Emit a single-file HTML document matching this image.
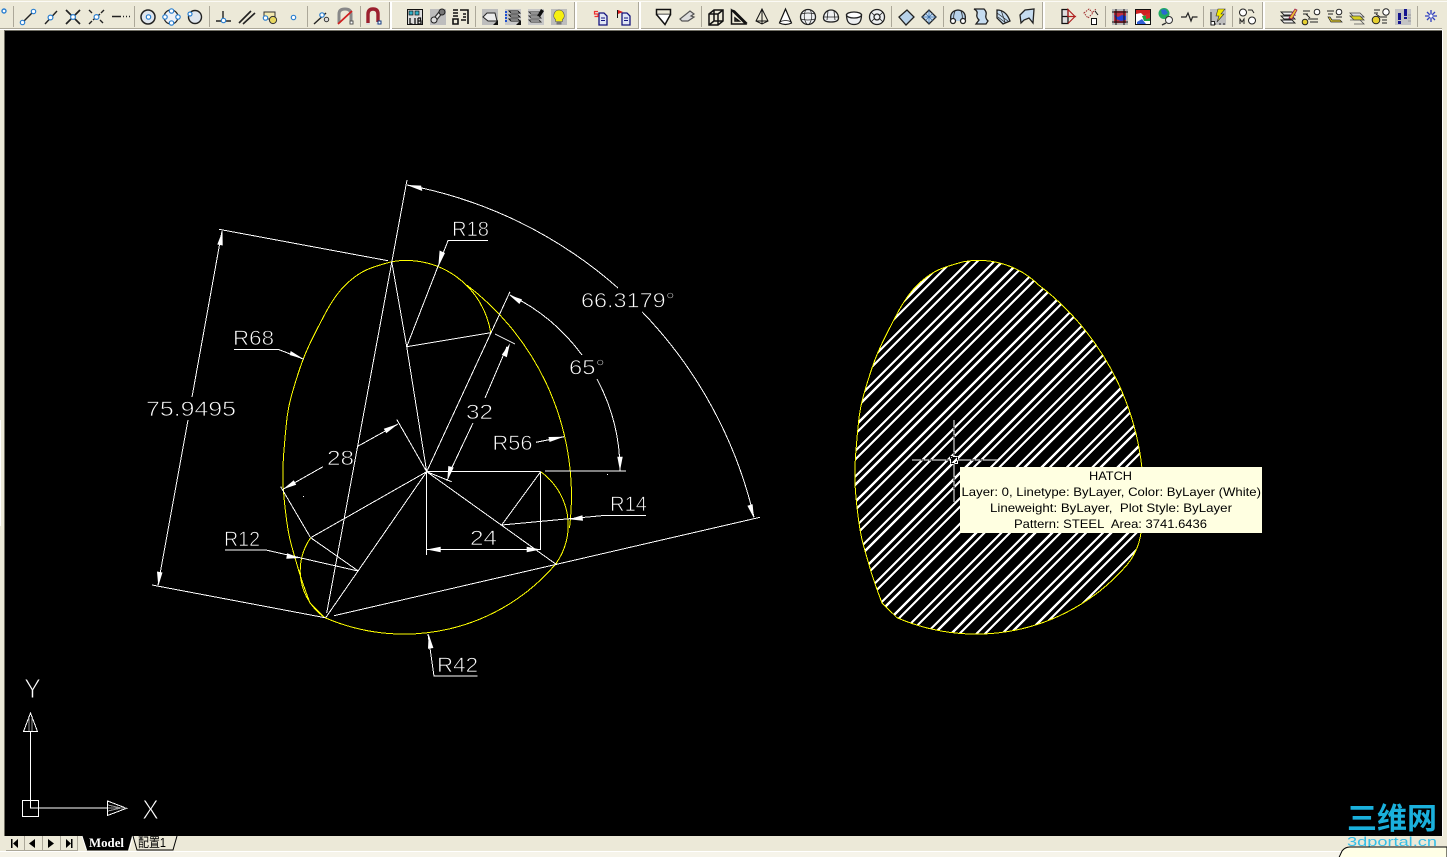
<!DOCTYPE html>
<html lang="zh"><head><meta charset="utf-8"><title>CAD</title>
<style>html,body{margin:0;padding:0;background:#ece9d8;overflow:hidden}svg{display:block}</style></head>
<body>
<svg xmlns="http://www.w3.org/2000/svg" width="1447" height="857" viewBox="0 0 1447 857">
<rect width="1447" height="857" fill="#ece9d8"/>
<!-- chrome -->
<rect x="0" y="1" width="1447" height="1" fill="#fbfaf5"/>
<rect x="0" y="28" width="1442" height="1" fill="#aca899"/>
<rect x="0" y="29" width="1442" height="1" fill="#fff"/>
<rect x="4" y="30" width="1438" height="1" fill="#716f64"/>
<rect x="4" y="30" width="1" height="806" fill="#716f64"/>
<rect x="1442" y="30" width="1" height="806" fill="#fff"/>
<rect x="0" y="420" width="1" height="106" fill="#fff"/>
<rect x="5" y="31" width="1437" height="805" fill="#000"/>
<rect x="0" y="852" width="1447" height="5" fill="#f6f4ea"/>
<rect x="0" y="851" width="1447" height="1" fill="#fff"/>
<!-- dividers -->
<g fill="#fff"><rect x="390" y="2" width="2" height="27"/><rect x="575" y="2" width="2" height="27"/><rect x="639" y="2" width="2" height="27"/><rect x="1043" y="2" width="2" height="27"/><rect x="1263" y="2" width="2" height="27"/></g>
<g fill="#aca899"><rect x="389" y="2" width="1" height="27"/><rect x="574" y="2" width="1" height="27"/><rect x="638" y="2" width="1" height="27"/><rect x="1042" y="2" width="1" height="27"/><rect x="1262" y="2" width="1" height="27"/>
<rect x="13" y="6" width="1" height="21"/><rect x="134" y="6" width="1" height="21"/><rect x="209" y="6" width="1" height="21"/><rect x="307" y="6" width="1" height="21"/><rect x="360" y="6" width="1" height="21"/><rect x="475" y="6" width="1" height="21"/><rect x="701" y="6" width="1" height="21"/><rect x="891" y="6" width="1" height="21"/><rect x="943" y="6" width="1" height="21"/><rect x="1105" y="6" width="1" height="21"/><rect x="1203" y="6" width="1" height="21"/><rect x="1232" y="6" width="1" height="21"/><rect x="1417" y="6" width="1" height="21"/></g>
<!-- osnap icons -->
<g fill="none" stroke="#222" stroke-width="1.4">
<circle cx="4" cy="11" r="2" fill="#fff" stroke="#2a7fd0"/>
<path d="M23 22L33 12"/><path d="M45 24L57 11"/><path d="M66 10L80 24M80 10L66 24" stroke-width="1.700"/><path d="M89 24l3-3M93 20L100 14M101 13l3-3M89 10l3 3M100 20l3 3"/><path d="M112 16.500h9M123 16.500h1M126 16.500h1M129 16.500h1" stroke-width="1.600"/>
<circle cx="148" cy="17" r="7" fill="#dfe6ee" stroke-width="1.500"/><circle cx="171" cy="17" r="7" fill="#eef1f5" stroke-width="1.200"/><circle cx="195" cy="17" r="6.500" fill="#dfe6ee" stroke-width="1.400"/>
<path d="M216 21h15M223 11v9"/><path d="M239 23L251 11M243 24L255 13" stroke-width="1.600"/><rect x="264" y="12" width="11" height="7" fill="#f3e9b0" stroke="#333" stroke-width="1"/><path d="M314 24L326 13"/>
<path d="M339 23V14Q339 9 345 9Q351 9 351 14V21" stroke="#888" stroke-width="3"/><path d="M338 24L352 11" stroke="#d02020" stroke-width="1.800"/>
<path d="M368 24V14Q368 9 373 9Q378 9 378 14V22" stroke="#9b1f2e" stroke-width="3.400"/><path d="M366 24h4M376 24h4" stroke="#ddd" stroke-width="2"/>
</g>
<g fill="#fff" stroke="#2a7fd0" stroke-width="1.2">
<circle cx="22.500" cy="22.500" r="2.200"/><circle cx="33.500" cy="11.500" r="2.200"/><circle cx="50.500" cy="17.500" r="2.400"/><circle cx="73" cy="17" r="2.400"/><circle cx="96.500" cy="17" r="2.400"/>
<circle cx="148.500" cy="17" r="2.200"/><circle cx="171.500" cy="11" r="2.200"/><circle cx="171.500" cy="23" r="2.200"/><circle cx="165" cy="17" r="2.200"/><circle cx="178" cy="17" r="2.200"/><circle cx="190" cy="14" r="2"/>
<circle cx="223.500" cy="20.500" r="2.200"/><circle cx="265.500" cy="18" r="2.200"/><circle cx="293.500" cy="17.500" r="2.200"/><circle cx="322" cy="15" r="2.200"/>
</g>
<circle cx="273" cy="20" r="3.600" fill="#e8d860" stroke="#333"/><circle cx="326.500" cy="19.500" r="2.200" fill="#ddd" stroke="#333"/>
<rect x="350" y="21" width="3" height="3" fill="#fff" stroke="#555"/><rect x="378" y="21" width="3" height="3" fill="#fff" stroke="#123a80"/>
<!-- lib group -->
<rect x="407.500" y="9.500" width="15" height="15" fill="#ddd" stroke="#111"/><rect x="409" y="11" width="4" height="4" fill="#30b0c8" stroke="#111" stroke-width=".7"/><rect x="415" y="11" width="4" height="4" fill="#30b0c8" stroke="#111" stroke-width=".7"/><path d="M410 18v6h2.500M415 18v6M418 18v6h3v-3h-3M418 18h2.500v3" fill="none" stroke="#111" stroke-width="1.300"/>
<rect x="430" y="9" width="16" height="16" fill="#bdbdbd"/><path d="M433 22L441 12" stroke="#333" stroke-width="4.500"/><path d="M433 22L441 12" stroke="#e8e8e8" stroke-width="2"/><circle cx="442" cy="12" r="3" fill="#777" stroke="#222"/><circle cx="434" cy="20" r="3" fill="#ddd" stroke="#222"/>
<path d="M453 10h5M453 13h5M453 16h5M453 19h5v5h-5zM460 10h8v14M463 14h3M463 17h3M461 20h5" fill="none" stroke="#111" stroke-width="1.600"/>
<rect x="482" y="9" width="16" height="16" fill="#bdbdbd"/><path d="M483 17L487 13H495L497 21H488Z" fill="#ececec" stroke="#222"/><path d="M493 25h5v-5z" fill="#111"/>
<rect x="505" y="9" width="16" height="16" fill="#c8c8c8"/><path d="M509 11h9l2 2-9 0zM509 15h9l2 2h-9zM509 19h9l2 2h-9z" fill="#eee" stroke="#111" stroke-width=".9"/><path d="M506 11v12" stroke="#1f50d0" stroke-width="2" stroke-dasharray="2 1"/><path d="M516 25h5v-5z" fill="#111"/>
<rect x="528" y="9" width="16" height="16" fill="#c8c8c8"/><path d="M529 12h10l2 2h-10zM529 16h10l2 2h-10zM529 20h10l2 2h-10z" fill="#eee" stroke="#333" stroke-width=".9"/><path d="M537 16L541 9l3 2-4 6" fill="#111"/>
<rect x="551" y="9" width="16" height="16" fill="#bdbdbd"/><path d="M559 10a5.500 5.500 0 0 1 3.500 9.500v2h-7v-2A5.500 5.500 0 0 1 559 10z" fill="#f6ef10" stroke="#555" stroke-width=".6"/><rect x="556.500" y="22" width="5" height="2.500" fill="#777"/>
<g fill="#dfe5f4" stroke="#14147e" stroke-width="1.300"><path d="M599 13h5l3 3v9h-8z"/><path d="M622 13h5l3 3v9h-8z"/></g>
<path d="M601 18h4M601 20.500h4M624 18h4M624 20.500h4" stroke="#14147e"/>
<path d="M598 11.500h-3.500v2.500h3.500v2.500h-3.500" fill="none" stroke="#f03030" stroke-width="1.200"/><path d="M617 10h1v8h-1z" fill="#111"/><path d="M618 10l5 2-5 2z" fill="#d81818"/>
<!-- solids -->
<g fill="#fff" stroke="#111" stroke-width="1.500">
<path d="M656.500 9.500h14v5h-14z" fill="#ece9d8"/><path d="M656.500 14.500l8.500 10 5.500-10" fill="#fff"/>
<path d="M680 19L690 11l4 3-3 2 3 1-6 4h-6z" fill="#ddd" stroke="#555" stroke-width="1.200"/>
<path d="M709 14l5-4h9v11l-5 4h-9zM709 14h9v11M718 14l5-4M714 10v11h9M714 21l-5 4" fill="none"/>
<path d="M731.500 10l14 14h-14zM731.500 10l3 1 12 12-1 1M735 18l4 3h-4z" fill="none"/>
<path d="M762 9l-6 12 6 3 6-3zM762 9v15M756 21l12 0" fill="none" stroke-width="1"/>
<path d="M785.500 9l-6 14q6 3 12 0z" stroke-width="1.200"/><path d="M779.500 22q6-3 12 0" fill="none" stroke-width=".8"/>
</g>
<g fill="#eef0f2" stroke="#222" stroke-width="1.300">
<circle cx="808" cy="17" r="7.500"/><path d="M801 14q7-2 14 0M800.500 19q7 2 15 0M806 9.500q-4 7.500 1 15M810 9.500q4 7.500-1 15" fill="none" stroke-width=".7"/>
<path d="M823.500 18a7.500 8 0 0 1 15 0q0 4-7.500 4t-7.500-4z"/><path d="M824 17h14M828 11l-1 9M834 11l1 9" fill="none" stroke-width=".8"/>
<path d="M846.500 14.500c2-2 13-2 15 0c0 8-3 10-7.500 10s-7.500-2-7.500-10z"/><ellipse cx="854" cy="15" rx="7.500" ry="3" fill="#fff"/>
<circle cx="877" cy="17" r="7.500"/><circle cx="877" cy="17" r="3"/><path d="M871 12l3 3M883 12l-3 3M871 22l3-3M883 22l-3-3" fill="none" stroke-width=".8"/>
</g>
<g stroke="#222" stroke-width="1.300">
<path d="M899 17L907 10l7 7-8 8z" fill="#b8d2ea"/>
<path d="M922 17l7-7 7 7-7 7z" fill="#c6dcf0"/><path d="M925.500 13.500l7 7M932.500 13.500l-7 7M929 10v14M922 17h14" stroke="#3b6ea8" stroke-width=".7" fill="none"/>
<path d="M951 21q-2-10 7-11q9 1 7 11" fill="#b8d2ea"/><path d="M955 11q-2 5-1 9M961 11q2 5 1 9" fill="none" stroke-width=".8"/><circle cx="953" cy="21" r="2.500" fill="#fff"/><circle cx="963" cy="21" r="2.500" fill="#fff"/>
<path d="M974 9q4 2 3 5t2 6l-3 4h10l2-3q-3-3-2-6t-2-6z" fill="#c6dcf0"/>
<path d="M997 10q9 0 13 11l-7 3-6-6z" fill="#c6dcf0"/><path d="M997 13l11 8M998 17l8 6M1001 10l4 12" stroke-width=".7" fill="none"/>
<path d="M1020 15l5-5 9-1-1 14-4-5-5 2-3 3z" fill="#c6dcf0"/>
</g>
<!-- modify / misc -->
<path d="M1062 9.500h6v14h-6zM1062 16.500h6" fill="#ddd" stroke="#111" stroke-width="1.300"/><path d="M1068 9.500l7 7h-7zM1068 16.500h7l-7 7" fill="none" stroke="#b02020" stroke-width="1.200"/>
<path d="M1084 13l5-4 4 4-5 5zM1093 12l3-3" fill="none" stroke="#a03030" stroke-dasharray="1.500 1"/><rect x="1091.500" y="18.500" width="5" height="6" fill="#fff" stroke="#111"/><path d="M1095 11l3 4" stroke="#111"/>
<rect x="1112" y="9" width="16" height="16" fill="#b8b8b8"/><rect x="1114" y="11" width="12" height="12" fill="#c03040"/><path d="M1114 15l4 2 4-2 4 1v4l-5 1-5-2z" fill="#2040d8"/><path d="M1116 9v16M1124 9v16M1112 12h16M1112 22h16" stroke="#111"/>
<rect x="1135.500" y="9.500" width="15" height="15" fill="#fff" stroke="#111"/><path d="M1136 10h14v4l-6 2-3-3-5 1z" fill="#d02020"/><path d="M1142 16l8-1v6l-6 0z" fill="#20a040"/><path d="M1146 14l4-1v5l-4 1z" fill="#d82828"/><path d="M1137 22l5-3 4 5h-9z" fill="#3060d8"/>
<circle cx="1164" cy="13.500" r="5.500" fill="#1faa60"/><path d="M1161 10l4-1 3 4-3 2-3-1z" fill="#2868d0"/><circle cx="1169" cy="20" r="3.500" fill="#f4f4f4" stroke="#333"/><path d="M1166 23l-4 2" stroke="#333" stroke-width="1.500"/>
<path d="M1181 17h5l2-4 3 8 1.500-4h5" fill="none" stroke="#222" stroke-width="1.200"/>
<rect x="1210" y="9" width="16" height="16" fill="#bdbdbd"/><path d="M1218 9h7l-4 5h3l-7 8 2-6h-3z" fill="#f2e800" stroke="#333" stroke-width=".6"/><path d="M1211 12v9M1214 24h2M1219 24h2M1223 24h2" stroke="#222"/><rect x="1211" y="21.500" width="3.500" height="3.500" fill="#fff" stroke="#222"/>
<circle cx="1243" cy="12.500" r="3.500" fill="#fff" stroke="#222"/><circle cx="1252" cy="20.500" r="3.500" fill="#fff" stroke="#222"/><path d="M1248 10h4l2 3M1240 24v-5l2 3 2-3v5" fill="none" stroke="#222"/>
<path d="M1281 12h11l3 3h-11zM1281 16h11l3 3h-11zM1281 20h11l3 3h-11z" fill="#eee" stroke="#222" stroke-width=".9"/><path d="M1289 18l6-9 2 1-5 9z" fill="#e6c030" stroke="#a02050" stroke-width=".8"/>
<circle cx="1317" cy="12" r="2.800" fill="#fff" stroke="#222"/><circle cx="1305" cy="22" r="2.800" fill="#e6d030" stroke="#222"/><path d="M1303 11h7M1303 14h5M1308 19h10M1310 22h8M1306 14l4 4" fill="none" stroke="#222"/>
<circle cx="1339" cy="12" r="2.800" fill="#fff" stroke="#222"/><path d="M1328 17l3 5h11l-2-2h-8l-2-3z" fill="#e6d030" stroke="#222" stroke-width=".7"/><path d="M1327 11h7M1328 14h5M1336 17h6" fill="none" stroke="#222"/>
<path d="M1350 13h10l4 4h-10z" fill="#ddd" stroke="#444" stroke-width=".8"/><path d="M1350 16h10l4 4h-10z" fill="#d8d020" stroke="#444" stroke-width=".8"/><path d="M1350 20h10l4 4h-10" fill="none" stroke="#555" stroke-width=".8"/>
<circle cx="1386" cy="12" r="3.200" fill="#fff" stroke="#222"/><circle cx="1376" cy="20" r="3.800" fill="#e6d030" stroke="#222"/><path d="M1374 10h6M1374 13h4M1380 17h7M1382 20h5M1382 23h5M1376 14l4 3" fill="none" stroke="#222"/>
<rect x="1395" y="9" width="16" height="16" fill="#c4c4c4"/><path d="M1398 13h3v7h-3zM1404 9h3v7h-3z" fill="#14148e"/><rect x="1398" y="21" width="3" height="3" fill="#14148e"/><rect x="1404" y="17" width="3" height="2" fill="#14148e"/><path d="M1408 15h3M1408 18h3M1408 21h3" stroke="#999"/>
<g stroke="#3040c0" stroke-width="1.300"><path d="M1431 10v12M1425 16h12M1427 12l8 8M1435 12l-8 8"/></g><circle cx="1431" cy="16" r="1.600" fill="#fff"/>
<!-- hatch + cam -->
<defs>
<path id="outer" d="M391.700 261.700A85.500 85.500 0 0 1 466.700 285A265 265 0 0 1 569.500 528A66 66 0 0 1 555.700 564A199 199 0 0 1 325 617.700L310 603Q302 581.700 298.500 569.850Q295 558 291.500 545.500Q288 533 285.500 511.500Q283 490 282.850 478.350Q282.700 466.700 283.850 451.700Q285 436.700 286.500 422.350Q288 408 291.500 395.500Q295 383 300 368Q305 353 313.350 336.500Q321.700 320 326.700 310.850Q331.700 301.700 337.350 294.200Q343 286.700 350.500 280.350Q358 274 365.500 270.350Q373 266.700 391.700 261.700Z"/>
<clipPath id="cp"><use href="#outer" transform="translate(572 0)"/></clipPath>
</defs>
<g shape-rendering="crispEdges" fill="none">
<path clip-path="url(#cp)" stroke="#fff" stroke-width="2.300" d="M850 329.700l300-300M850 338l300-300M850 355l300-300M850 363.300l300-300M850 380.300l300-300M850 388.700l300-300M850 405.700l300-300M850 414l300-300M850 431l300-300M850 439.300l300-300M850 456.300l300-300M850 464.700l300-300M850 481.700l300-300M850 490l300-300M850 507l300-300M850 515.300l300-300M850 532.300l300-300M850 540.700l300-300M850 557.700l300-300M850 566l300-300M850 583l300-300M850 591.300l300-300M850 608.300l300-300M850 616.700l300-300M850 633.700l300-300M850 642l300-300M850 659l300-300M850 667.300l300-300M850 684.300l300-300M850 692.700l300-300M850 709.700l300-300M850 718l300-300M850 735l300-300M850 743.300l300-300M850 760.300l300-300M850 768.700l300-300M850 785.700l300-300M850 794l300-300M850 811l300-300M850 819.300l300-300M850 836.300l300-300M850 844.700l300-300"/>
<use href="#outer" transform="translate(572 0)" stroke="#ff0"/>
<!-- cam left -->
<g stroke="#ff0">
<path d="M391.700 261.700A85.500 85.500 0 0 1 490.700 332.700"/>
<path d="M466.700 285A265 265 0 0 1 569.500 528"/>
<path d="M540.700 471.700A66 66 0 0 1 555.700 564A199 199 0 0 1 325 617.700A57 57 0 0 1 310.700 537.700"/>
<path d="M391.700 261.700Q373 266.700 365.500 270.350Q358 274 350.500 280.350Q343 286.700 337.350 294.200Q331.700 301.700 326.700 310.850Q321.700 320 313.350 336.500Q305 353 300 368Q295 383 291.500 395.500Q288 408 286.500 422.350Q285 436.700 283.850 451.700Q282.700 466.700 282.850 478.350Q283 490 285.500 511.500Q288 533 291.500 545.500Q295 558 298.500 569.850Q302 581.700 310 603L325 617.700"/>
</g>
<!-- white dims -->
<path stroke="#fff" d="M407 180L326.700 613M219 229.300L388 260.700M222 231L192 397M188 420L158 585M152 585L325 617.700M334 615.700L760 517.300
M407 185A440 440 0 0 1 618 288M642 311.700A440 440 0 0 1 754 517
M510 295A194 194 0 0 1 582 355M597 379A194 194 0 0 1 620 471.700
M426.700 471.700L510 291.700M426.700 471.700L406.700 346.700 391.700 261.700M406.700 346.700L448 240.700H488M406.700 346.700L490.700 332.700M495 334L515 344
M507 346.700L485 398M473 423L451.700 468 447 481M426.700 471.700L451.700 481.700M536 442.300L564 436.700
M426.500 471.700H540.700M545 471H626M426.500 471.700V555M540.700 471.700V550M426.500 549.500H540.700M426.700 471.700L555.700 564M501.700 525L540.700 471.700M501.700 525L601.700 515.700H646
M426.700 471.700L310.700 537.700M426.700 471.700L325.700 617.700M310.700 537.700L358.300 571M280.700 486.700L310 536.700M225 550H266L358 571
M396.700 419.300L426.700 471.700M357 446.700L398 424M323 466.700L283 489.300M234 349.300H278L304 359.300M428 634L434 676H477.700"/>
<rect x="303" y="496" width="1" height="1" fill="#fff"/><rect x="607" y="474" width="1" height="1" fill="#fff"/>
</g>
<g fill="#fff">
<path d="M222.500 231L222.700 245.500 217.300 244.500Z"/><path d="M158.300 586L162.500 572.500 157 571.500Z"/>
<path d="M398 424L386.200 433.200 383.800 428.800Z"/><path d="M283 489.300L296.200 484.700 293.800 480.300Z"/>
<path d="M304 359.300L289.700 355 290.700 351Z"/><path d="M438.300 266.700L445 253 439.600 250.500Z"/>
<path d="M564 436.700L549.500 442 548.500 437Z"/><path d="M510 343.300L506.800 357.200 501.800 354.800Z"/>
<path d="M447.300 480.700L453.700 467.500 448.300 466Z"/><path d="M509.300 295L519.400 304 522 299.400Z"/>
<path d="M620 470.700L622.700 456.700 617.300 456.700Z"/><path d="M406.700 185L422.300 191 421.100 185.600Z"/>
<path d="M754 518.300L752.600 504.200 747.400 505.800Z"/><path d="M426.700 549.500L440.700 552.200 440.700 546.800Z"/>
<path d="M540.700 549.500L526.700 552.200 526.700 546.800Z"/><path d="M569 519.300L583 520.700 582.400 515.300Z"/>
<path d="M300 558L286.300 558.700 287.100 553.300Z"/><path d="M428.700 634.300L433.400 648 428 648.700Z"/>
</g>
<!-- dimension text -->
<g font-family="'Liberation Sans',sans-serif" font-size="21" fill="#fff" stroke="#000" stroke-width=".7">
<text x="452" y="236" textLength="37" lengthAdjust="spacingAndGlyphs">R18</text>
<text x="233" y="345" textLength="41" lengthAdjust="spacingAndGlyphs">R68</text>
<text x="146" y="416" textLength="90" lengthAdjust="spacingAndGlyphs">75.9495</text>
<text x="581" y="307.500" textLength="94" lengthAdjust="spacingAndGlyphs">66.3179°</text>
<text x="569" y="374.500" textLength="36" lengthAdjust="spacingAndGlyphs">65°</text>
<text x="466" y="419" textLength="27" lengthAdjust="spacingAndGlyphs">32</text>
<text x="492.500" y="450" textLength="40" lengthAdjust="spacingAndGlyphs">R56</text>
<text x="327" y="465" textLength="27" lengthAdjust="spacingAndGlyphs">28</text>
<text x="224" y="546" textLength="36" lengthAdjust="spacingAndGlyphs">R12</text>
<text x="470" y="545" textLength="27" lengthAdjust="spacingAndGlyphs">24</text>
<text x="610" y="511" textLength="37" lengthAdjust="spacingAndGlyphs">R14</text>
<text x="437" y="672" textLength="41" lengthAdjust="spacingAndGlyphs">R42</text>
<text x="24" y="698" font-size="28" stroke-width="1" textLength="17" lengthAdjust="spacingAndGlyphs">Y</text>
<text x="142" y="819" font-size="28" stroke-width="1" textLength="17" lengthAdjust="spacingAndGlyphs">X</text>
</g>
<!-- UCS -->
<g shape-rendering="crispEdges" fill="none" stroke="#fff">
<rect x="22.500" y="800.500" width="16" height="16"/>
<path d="M30.500 732V808H107"/>
<path d="M30.500 713L23.500 731.500H37.500Z"/><path d="M107.500 801V815.500L126.500 808.300Z"/>
<path d="M29 718V731M32 718V731M108 805L121 808M108 811L121 808M108 808H126" stroke="#999"/>
</g>
<!-- crosshair -->
<g style="mix-blend-mode:difference" shape-rendering="crispEdges" fill="none" stroke="#fff">
<path d="M912 460H950M958 460H997M954 420V456M954 464V502"/><rect x="950.500" y="456.500" width="7" height="7"/>
</g>
<!-- tooltip -->
<rect x="960" y="467" width="302" height="66" fill="#ffffe1"/>
<g font-family="'Liberation Sans',sans-serif" font-size="12" fill="#000">
<text x="1089" y="480" textLength="43" lengthAdjust="spacingAndGlyphs">HATCH</text>
<text x="961.500" y="496" textLength="299.500" lengthAdjust="spacingAndGlyphs">Layer: 0, Linetype: ByLayer, Color: ByLayer (White)</text>
<text x="990" y="512" textLength="242" lengthAdjust="spacingAndGlyphs">Lineweight: ByLayer,&#160; Plot Style: ByLayer</text>
<text x="1014" y="528" textLength="193" lengthAdjust="spacingAndGlyphs">Pattern: STEEL&#160; Area: 3741.6436</text>
</g>
<!-- tabs -->
<rect x="6" y="836" width="71" height="15" fill="#ece9d8"/>
<path d="M24.500 836v14M42.500 836v14M60.500 836v14M77.500 836v14M6 850.500h72" stroke="#aca899" fill="none"/>
<g fill="#000"><rect x="11" y="839" width="1.500" height="9"/><path d="M18 839v9l-5-4.500z"/><path d="M35 839v9l-6-4.500z"/><path d="M48 839v9l6-4.500z"/><path d="M66 839v9l5-4.500z"/><rect x="71" y="839" width="1.500" height="9"/></g>
<path d="M82 836h50l-4 14.500H87z" fill="#000"/><path d="M82 836l4.500 14" stroke="#fff" fill="none"/>
<text x="89" y="847" font-family="'Liberation Serif',serif" font-size="12.500" font-weight="bold" fill="#fff" textLength="35" lengthAdjust="spacingAndGlyphs">Model</text>
<path d="M133 836l-4 14" stroke="#fff" fill="none"/>
<path d="M133 836l4 14h36l4-14" fill="#ece9d8" stroke="#000"/>
<text x="138" y="847" font-family="'Liberation Sans','Noto Sans CJK SC',sans-serif" font-size="13" fill="#000" textLength="28" lengthAdjust="spacingAndGlyphs">配置1</text>
<!-- watermark -->
<text x="1347" y="829" font-family="'Liberation Sans','Noto Sans CJK SC',sans-serif" font-size="30" font-weight="700" fill="#1ab0dc" textLength="90" lengthAdjust="spacingAndGlyphs">三维网</text>
<text x="1347" y="846" font-family="'Liberation Sans',sans-serif" font-size="13" fill="#35bfe8" textLength="90" lengthAdjust="spacingAndGlyphs">3dportal.cn</text>
<path d="M1339 857.500L1342 851Q1345 847 1350 847H1447V858H1339Z" fill="#ffffe6" stroke="#000"/>
</svg>
</body></html>
